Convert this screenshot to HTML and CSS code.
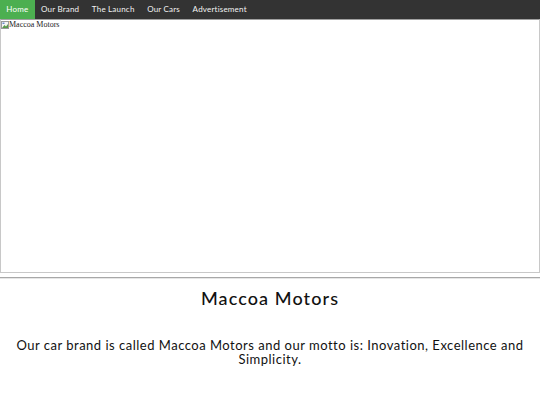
FILE: index.html
```html
<!DOCTYPE html>
<html>
<head>
<meta charset="utf-8">
<link rel="stylesheet" href="styles.css">
</head>
<body>
<nav class="topnav">
  <a class="active" href="#">Home</a>
  <a href="#">Our Brand</a>
  <a href="#">The Launch</a>
  <a href="#">Our Cars</a>
  <a href="#">Advertisement</a>
</nav>
<div class="hero">
  <span class="alt"><svg class="broken" width="8" height="8" viewBox="0 0 8 8"><rect x="0.5" y="0.5" width="7" height="7" fill="#f4f4f4" stroke="#9a9a9a"/><path d="M1 7 L3.5 4 L5 5.5 L7 3 L7 7 Z" fill="#5a9a4a"/><rect x="1.5" y="1.5" width="2" height="1.5" fill="#6a8ac8"/></svg>Maccoa Motors</span>
</div>
<hr class="rule">
<h1 class="title">Maccoa Motors</h1>
<p class="motto">Our car brand is called Maccoa Motors and our motto is: Inovation, Excellence and Simplicity.</p>
</body>
</html>
```
FILE: styles.css
```css
html, body {
  margin: 0;
  padding: 0;
  background: #fff;
}
body {
  font-family: "Lato", "DejaVu Sans", sans-serif;
  color: #111;
}
.topnav {
  display: flex;
  background: #333;
  height: 19px;
}
.topnav a {
  display: block;
  color: #f2f2f2;
  text-decoration: none;
  font-size: 8px;
  line-height: 19px;
  padding: 0 6.3px;
  letter-spacing: 0.2px;
}
.topnav a.active {
  background: #4caf50;
  color: #fff;
}
.hero {
  box-sizing: border-box;
  height: 254px;
  border: 1px solid #c8c8c8;
  border-top-color: #a0a0a0;
}
.alt {
  display: flex;
  align-items: center;
  font-family: "Liberation Serif", serif;
  font-size: 8px;
  color: #222;
  line-height: 9px;
}
.rule {
  margin: 4px 0 0 0;
  border: 0;
  border-top: 1px solid #a8a8a8;
  border-bottom: 1px solid #e6e6e6;
  height: 0;
}
.title {
  text-align: center;
  font-size: 18px;
  font-weight: 500;
  margin: 8px 0 0 0;
  line-height: 22px;
  letter-spacing: 1.1px;
}
.motto {
  text-align: center;
  font-size: 13px;
  line-height: 13.5px;
  margin: 30px 12px 0 12px;
  letter-spacing: 0.5px;
}
```
